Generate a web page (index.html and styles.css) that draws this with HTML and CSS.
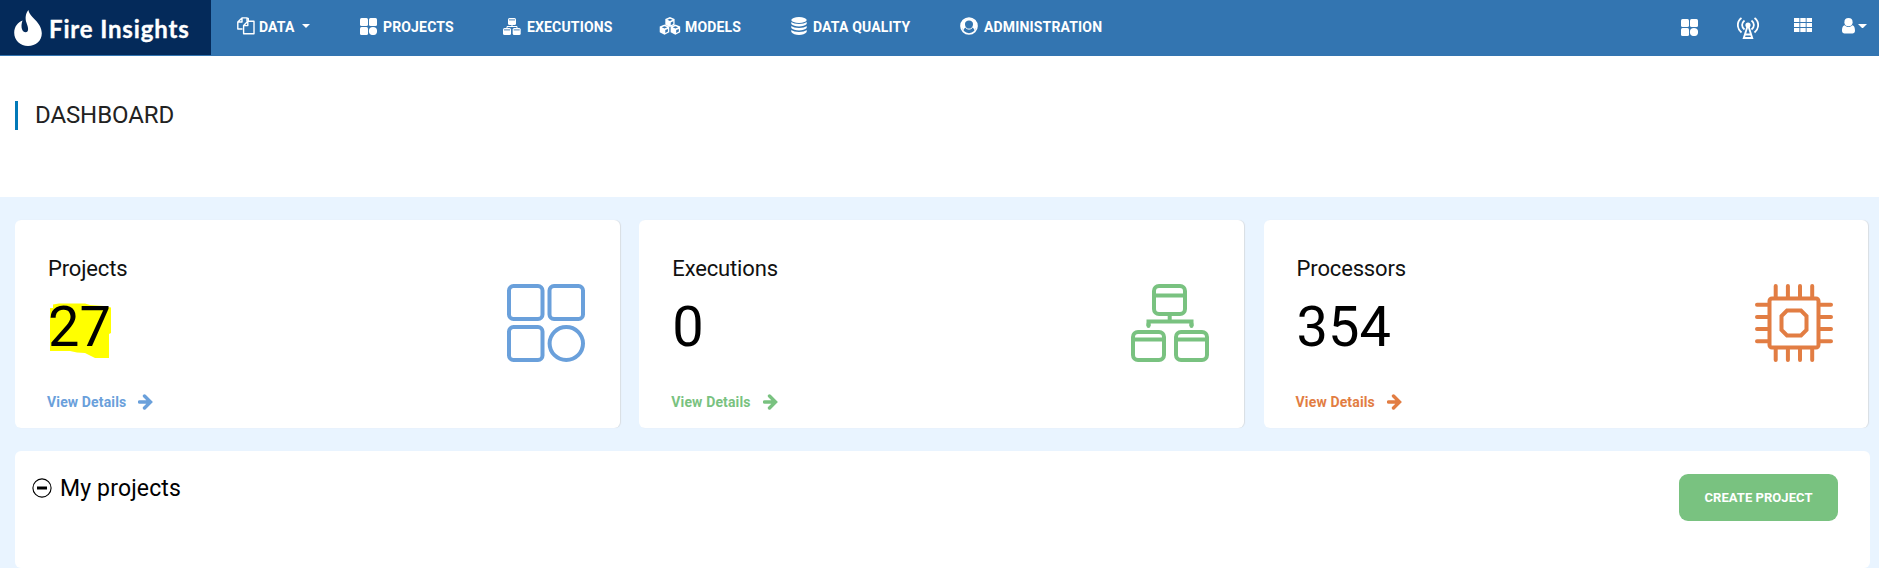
FILE: index.html
```html
<!DOCTYPE html>
<html lang="en">
<head>
<meta charset="utf-8">
<title>Fire Insights</title>
<link rel="stylesheet" href="styles.css">
</head>
<body>
<svg class="defs" width="0" height="0">
  <symbol id="tiles" viewBox="0 0 17 17"><rect width="8" height="8" rx="1.5"/><rect x="9" width="8" height="8" rx="1.5"/><rect y="9" width="8" height="8" rx="1.5"/><circle cx="13" cy="13" r="4.1"/></symbol>
  <symbol id="cube" viewBox="0 0 12 12"><path d="M6 .3 11.3 2.6V9L6 11.7.7 9V2.6Z"/><path d="M3 3.5 6 2.3 9 3.5 6 4.8ZM6.9 6.5 9.8 5.2V8.2L6.9 9.7Z" fill="#3375b1"/></symbol>
  <symbol id="arrow" viewBox="0 0 15 16"><path d="M1.5 8H12M6.5 2 12.5 8 6.5 14" fill="none" stroke="currentColor" stroke-width="3.4" stroke-linecap="round"/></symbol>
</svg>
<header class="navbar">
  <a class="brand">
    <svg class="flame" viewBox="0 0 28 36"><path d="M14.500 0C15 7 27.800 12 27.800 23.200C27.800 30.800 21.600 36 14 36S.2 30.500.2 22.800C.2 16.500 4 12.500 8.600 10.600C6.800 14.500 7 22 11.300 22.200C16 22.300 13.700 16 12.400 12.500C11 8.500 11.500 3 14.500 0Z"/></svg>
    <span class="brand-name">Fire Insights</span>
  </a>
  <nav class="menu">
    <a class="item data"><svg width="18" height="18" viewBox="0 0 18 18"><g fill="none" stroke="currentColor" stroke-width="1.4" stroke-linejoin="round"><path d="M5.5 12H.8V5L5 .9H10V4.5M5 1V5H1"/><path d="M6.6 16.8V8.5L10.8 4.3H17V16.8ZM10.8 4.5V8.6H6.8M10 1.5H11.3V4"/></g></svg><span>DATA</span><i class="caret"></i></a>
    <a class="item projects"><svg width="17" height="17"><use href="#tiles"/></svg><span>PROJECTS</span></a>
    <a class="item executions"><svg width="18" height="17" viewBox="0 0 18 17"><rect x="5" width="8" height="7" rx="1.5"/><rect y="10" width="8" height="7" rx="1.5"/><rect x="9.7" y="10" width="8" height="7" rx="1.5"/><path d="M9 7V8.5M4 10V8.5H14V10" fill="none" stroke="currentColor"/><path d="M6 1.9H12M1 11.9H7M10.7 11.9H16.7" stroke="#3375b1" stroke-width=".9"/></svg><span>EXECUTIONS</span></a>
    <a class="item models"><svg width="22" height="18" viewBox="0 0 22 18"><use href="#cube" x="5.2" y="-.2" width="11.5" height="10.5"/><use href="#cube" x="-.3" y="7.2" width="11.6" height="10.8"/><use href="#cube" x="10.6" y="7.2" width="11.6" height="10.8"/></svg><span>MODELS</span></a>
    <a class="item quality"><svg width="16" height="18" viewBox="0 0 16 18"><ellipse cx="8" cy="3" rx="7.7" ry="3"/><path d="M.3 5C3 7.6 13 7.6 15.7 5V7C13 10.3 3 10.3.3 7ZM.3 9C3 11.6 13 11.6 15.7 9V11C13 14.3 3 14.3.3 11ZM.3 13C3 15.6 13 15.6 15.7 13V15C13 18.9 3 18.9.3 15Z"/></svg><span>DATA QUALITY</span></a>
    <a class="item admin"><svg width="18" height="18" viewBox="0 0 18 18"><circle cx="9" cy="9" r="8" fill="none" stroke="currentColor" stroke-width="1.7"/><path d="M2.5 3.5 9 1 15.5 3.5 17 9 14.500 14C14.200 11.500 13.300 10.900 11.700 10.600C12.800 9.500 13 8 13 7C13 4.800 11.300 3.400 9 3.400S5 4.800 5 7C5 8 5.200 9.500 6.300 10.600C4.700 10.900 3.800 11.500 3.500 14L1 9Z"/><path d="M5.800 10.800C7.800 12.600 10.200 12.600 12.200 10.800" fill="none" stroke="currentColor" stroke-width="1"/></svg><span>ADMINISTRATION</span></a>
  </nav>
  <div class="tools">
    <svg class="t-tiles" width="17" height="17"><use href="#tiles"/></svg>
    <svg class="t-signal" width="22" height="22" viewBox="0 0 22 22"><g fill="none" stroke="currentColor" stroke-width="1.8"><path d="M4.5 1C-.4 4.5-.4 11.5 4.5 15.5M17.500 1C22.400 4.500 22.400 11.500 17.500 15.500M7.500 3.500C4.300 6 4.300 10 7.500 12.500M14.500 3.500C17.700 6 17.700 10 14.500 12.500"/><path d="M10.600 9 6.800 21H15.200L11.400 9M8.500 17.500H13.500" stroke-width="1.900"/></g><circle cx="11" cy="8" r="2.600"/></svg>
    <svg class="t-grid" width="18" height="14" viewBox="0 0 18 14"><path d="M0 0H5.400V4H0ZM6.300 0H11.700V4H6.300ZM12.600 0H18V4H12.600ZM0 5H5.400V9H0ZM6.300 5H11.700V9H6.300ZM12.600 5H18V9H12.600ZM0 10H5.400V14H0ZM6.300 10H11.700V14H6.300ZM12.600 10H18V14H12.600Z"/></svg>
    <svg class="t-user" width="13" height="16" viewBox="0 0 13 16"><circle cx="6.500" cy="4.200" r="4.100"/><path d="M2.700 7.200C4.800 9.600 8.200 9.600 10.300 7.200C12.500 7.600 13 10.500 13 12.800C13 14.700 11.800 15.500 10.500 15.500H2.500C1.200 15.500 0 14.700 0 12.800C0 10.500.5 7.600 2.700 7.200Z"/></svg>
    <i class="caret"></i>
  </div>
</header>
<section class="heading"><h1>DASHBOARD</h1></section>
<main class="content">
  <div class="cards">
    <article class="card blue">
      <div class="info"><h2>Projects</h2><div class="count"><span class="marked"><svg class="marker" width="62" height="56" viewBox="0 0 62 56"><path d="M3 1.500 9 .5H35L40 2 54 3 61 4.500V30L59 31V55H45L39 52 35 50 27 49.500 20 48H0V5H3Z"/></svg><span class="num">27</span></span></div><a class="details">View Details<svg width="15" height="16"><use href="#arrow"/></svg></a></div>
      <svg class="pic" viewBox="0 0 78 78"><rect x="2" y="2" width="33.500" height="33" rx="4.500"/><rect x="42.500" y="2" width="33.500" height="33" rx="4.500"/><rect x="2" y="43" width="33.500" height="33" rx="4.500"/><ellipse cx="59.300" cy="59.500" rx="16.700" ry="16.500"/></svg>
    </article>
    <article class="card green">
      <div class="info"><h2>Executions</h2><div class="count"><span class="num">0</span></div><a class="details">View Details<svg width="15" height="16"><use href="#arrow"/></svg></a></div>
      <svg class="pic" viewBox="0 0 78 78"><rect x="23" y="2" width="31" height="28" rx="5"/><path d="M23 11.500H54M38.700 30V37.500M17.500 42V37.500H60.500V42" /><path d="M17.500 42V40M60.500 42V40" stroke-linecap="round"/><rect x="2" y="48" width="31" height="28" rx="5"/><rect x="45" y="48" width="31" height="28" rx="5"/><path d="M2 55.500H33M45 55.500H76"/></svg>
    </article>
    <article class="card orange">
      <div class="info"><h2>Processors</h2><div class="count"><span class="num">354</span></div><a class="details">View Details<svg width="15" height="16"><use href="#arrow"/></svg></a></div>
      <svg class="pic" viewBox="0 0 78 78"><rect x="14.500" y="14.500" width="49" height="49" rx="2.500"/><path d="M32 26.500H46L51.500 32V46L46 51.500H32L26.500 46V32Z"/><path stroke-linecap="round" d="M20.700 13V2M32.900 13V2M45 13V2M57.200 13V2M20.700 65V76M32.900 65V76M45 65V76M57.200 65V76M13 20.700H2M13 32.900H2M13 45H2M13 57.200H2M65 20.700H76M65 32.900H76M65 45H76M65 57.200H76"/></svg>
    </article>
  </div>
  <section class="panel">
    <div class="panel-title"><svg width="20" height="20" viewBox="0 0 20 20"><circle cx="10" cy="10" r="9.100" fill="none" stroke="#000" stroke-width="1.100"/><path d="M5 10H15" stroke="#000" stroke-width="3"/></svg><h3>My projects</h3></div>
    <button class="create">CREATE PROJECT</button>
  </section>
</main>
</body>
</html>
```
FILE: styles.css
```css
* { box-sizing: border-box; }
body { margin: 0; height: 568px; overflow: hidden; background: #fff; color: #000; font-family: Roboto, sans-serif; }
h1, h2, h3 { margin: 0; font-weight: 400; }
svg { display: block; flex: none; fill: currentColor; }
.defs { display: none; }
.navbar { display: flex; height: 56px; background: #3375b1; color: #fff; }
.brand { display: flex; width: 211px; height: 55px; padding: 10px 0 0 14px; background: #042a5a; }
.flame { width: 28px; height: 36px; }
.brand-name { margin-left: 7px; font: 700 24px/37px Lato, sans-serif; letter-spacing: .85px; white-space: nowrap; -webkit-text-stroke: .35px #fff; }
.menu { display: flex; align-items: flex-start; padding: 17px 0 0 26px; }
.item { display: flex; height: 20px; font-size: 14px; font-weight: 700; line-height: 20px; letter-spacing: .16px; white-space: nowrap; }
.item span { margin-left: 6px; }
.data { width: 123px; }
.data span { margin-left: 4px; }
.projects { width: 143px; padding-top: 1px; }
.executions { width: 156px; padding-top: 1px; }
.projects span, .executions span { margin-top: -1px; }
.models { width: 132px; }
.models span { margin-left: 4px; }
.quality { width: 169px; }
.caret { width: 8px; height: 4px; border: 4px solid transparent; border-top-color: #fff; border-bottom: 0; }
.item .caret { margin: 7px 0 0 7px; }
.tools { display: flex; align-items: flex-start; margin-left: auto; padding-right: 12px; }
.t-tiles { margin: 19px 39px 0 0; }
.t-signal { margin: 17px 35px 0 0; }
.t-grid { margin: 18px 30px 0 0; }
.t-user { margin: 18px 3px 0 0; }
.tools .caret { width: 9px; border-width: 4px 4.5px 0; margin-top: 24px; }
.heading { height: 141px; padding: 45px 15px 0; }
.heading h1 { height: 29px; padding-left: 17px; border-left: 3px solid #0279b8; font-size: 24px; line-height: 28px; letter-spacing: -.1px; color: #222; }
.content { height: 371px; padding: 23px 9px 0 15px; background: #e9f4ff; }
.cards { display: grid; grid-template-columns: repeat(3, 604.6px); column-gap: 19.7px; }
.card { display: flex; justify-content: space-between; height: 208px; padding: 33px 35px 0 32px; background: #fff; border-radius: 6px; box-shadow: 1px 0 1px #d9dee3; }
.blue { color: #6aa0db; }
.green { color: #79c280; }
.orange { color: #e27d43; }
.card h2 { padding-left: 1px; color: #111; font-size: 22px; line-height: 32px; letter-spacing: -.15px; }
.count { height: 93px; margin-top: 14px; padding-left: 1px; color: #000; font-size: 56px; line-height: 56px; }
.marked { position: relative; display: inline-block; }
.marker { position: absolute; left: 2px; top: 4px; color: #ff0; }
.num { position: relative; }
.details { display: flex; font-size: 14px; line-height: 20px; letter-spacing: .14px; font-weight: 700; }
.details svg { margin: 2px 0 0 12px; }
.pic { width: 78px; height: 78px; margin-top: 31px; fill: none; stroke: currentColor; stroke-width: 4; }
.panel { display: flex; justify-content: space-between; align-items: flex-start; width: 1855px; height: 117px; margin-top: 23px; padding: 23px 32px 0 17px; border-radius: 6px; background: #fff; }
.panel-title { display: flex; align-items: center; }
.panel-title h3 { margin-left: 8px; padding-top: 1px; font-size: 23px; line-height: 27px; letter-spacing: .15px; }
.create { width: 159px; height: 47px; padding: 0; border: 0; border-radius: 9px; background: #79c280; color: #fff; font: 700 13px/45px Roboto, sans-serif; letter-spacing: .05px; }
```
